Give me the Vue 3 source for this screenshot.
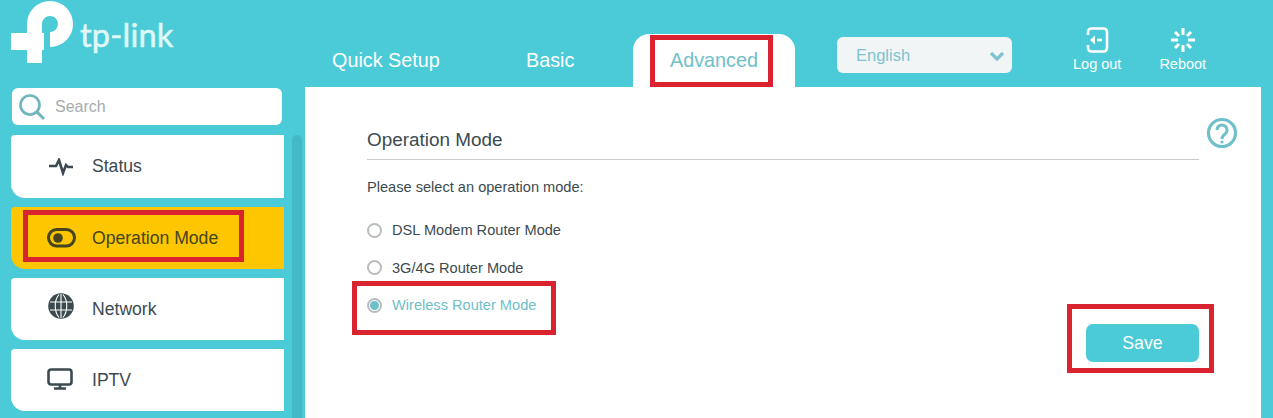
<template>
  <div class="page">
    <header class="topbar">
      <div class="logo">
        <svg width="68" height="66" viewBox="0 0 68 66" fill="none" stroke="#fff">
          <path d="M29.500 63V24a15.500 15.500 0 1 1 15.500 15.500" stroke-width="15" />
          <path d="M6 41.500h33" stroke-width="17" />
        </svg>
        <span class="wordmark">tp-link</span>
      </div>
      <nav class="tabs">
        <a v-for="tab in tabs" :key="tab" class="tab" :class="{ active: tab === 'Advanced' }">
          {{ tab }}
          <i v-if="tab === 'Advanced'" class="mark mark-tab"></i>
        </a>
      </nav>
      <div class="lang">
        <span>English</span>
        <svg width="16" height="10" viewBox="0 0 16 10">
          <path d="M2 2l6 6 6-6" fill="none" stroke="#7fc4cc" stroke-width="3.200" />
        </svg>
      </div>
      <div class="actions">
        <div class="action">
          <svg width="23" height="26" viewBox="0 0 23 26" fill="none" stroke="#fff" stroke-width="2.600">
            <path d="M2 8V5a3.500 3.500 0 0 1 3.500-3.500h12A3.500 3.500 0 0 1 21 5v16a3.500 3.500 0 0 1-3.500 3.500h-12A3.500 3.500 0 0 1 2 21v-3" />
            <path d="M4 13l5-4.500v9z" fill="#fff" stroke="none" />
            <path d="M11 13h5" />
          </svg>
          <span>Log out</span>
        </div>
        <div class="action">
          <svg width="26" height="26" viewBox="0 0 26 26" stroke="#fff" stroke-width="3">
            <path d="M13 1v7M13 18v7M1 13h7M18 13h7M5 5l4 4M17 17l4 4M21 5l-4 4M9 17l-4 4" />
          </svg>
          <span>Reboot</span>
        </div>
      </div>
    </header>

    <div class="body">
      <aside class="side">
        <div class="search">
          <svg width="28" height="28" viewBox="0 0 28 28" fill="none" stroke="#6fb5bd" stroke-width="2.600">
            <circle cx="12" cy="12" r="9.500" />
            <path d="M19 19l7 7" stroke-width="3" />
          </svg>
          <span>Search</span>
        </div>
        <div class="menu-wrap">
          <ul class="menu">
            <li v-for="item in menu" :key="item.label" class="item" :class="{ on: item.on }">
              <span class="item-icon" v-html="item.icon"></span>
              <span>{{ item.label }}</span>
              <i v-if="item.on" class="mark mark-item"></i>
            </li>
          </ul>
          <div class="scroll"></div>
        </div>
      </aside>

      <main class="panel">
        <div class="title-row">
          <h2>Operation Mode</h2>
          <svg class="help" width="32" height="32" viewBox="0 0 32 32" fill="none" stroke="#6fc0c9">
            <circle cx="16" cy="16" r="13.500" stroke-width="3.200" />
            <path d="M11 13a5 5 0 1 1 8 4c-2 1.500-3 2.500-3 5" stroke-width="3" />
            <circle cx="16" cy="25" r="1.600" fill="#6fc0c9" stroke="none" />
          </svg>
        </div>
        <p class="hint">Please select an operation mode:</p>
        <div class="modes">
          <label v-for="mode in modes" :key="mode.label" class="mode" :class="{ picked: mode.picked }">
            <span class="radio"><b v-if="mode.picked"></b></span>
            {{ mode.label }}
            <i v-if="mode.picked" class="mark mark-mode"></i>
          </label>
        </div>
        <div class="foot">
          <button class="save">
            Save
            <i class="mark mark-save"></i>
          </button>
        </div>
      </main>
    </div>
  </div>
</template>

<script setup>
const tabs = ['Quick Setup', 'Basic', 'Advanced']

const menu = [
  {
    label: 'Status',
    icon: '<svg width="28" height="18" viewBox="0 0 28 18" fill="none" stroke="#3c4a50" stroke-width="2.600"><path d="M2 8h7l3-6 4 13 3-8 2 2h5"/></svg>'
  },
  {
    label: 'Operation Mode',
    on: true,
    icon: '<svg width="30" height="20" viewBox="0 0 30 20" fill="none" stroke="#45451f" stroke-width="3"><rect x="1.500" y="1.500" width="26" height="16.500" rx="8.200"/><circle cx="11" cy="10" r="4.800" fill="#45451f" stroke="none"/></svg>'
  },
  {
    label: 'Network',
    icon: '<svg width="28" height="26" viewBox="0 0 26 26"><circle cx="13" cy="13" r="12.800" fill="#3c4a50"/><path d="M2 9h22M2 17h22M13 1v24M11 1.500c-5 6-5 17 0 23M15 1.500c5 6 5 17 0 23" fill="none" stroke="#fff" stroke-width="1.100"/></svg>'
  },
  {
    label: 'IPTV',
    icon: '<svg width="28" height="22" viewBox="0 0 28 22" fill="none" stroke="#3c4a50" stroke-width="2.600"><rect x="1.500" y="1.500" width="23" height="15" rx="2.500"/><path d="M13 17v3M7 20.500h12"/></svg>'
  }
]

const modes = [
  { label: 'DSL Modem Router Mode' },
  { label: '3G/4G Router Mode' },
  { label: 'Wireless Router Mode', picked: true }
]
</script>

<style>
html,
body {
  margin: 0;
  overflow: hidden;
}
</style>

<style scoped>
.page {
  width: 1273px;
  height: 418px;
  overflow: hidden;
  background: #4acbd7;
  font-family: "Liberation Sans", Arial, sans-serif;
  color: #3c4a50;
}

.topbar {
  display: flex;
  height: 87px;
}

.logo {
  width: 332px;
  flex: none;
  display: flex;
  align-items: flex-start;
}

.logo svg {
  margin: 0 0 0 5px;
}

.wordmark {
  margin: 15px 0 0 7px;
  font-family: Lato, sans-serif;
  font-size: 32.500px;
  letter-spacing: 0.2px;
  color: #dff7f8;
  -webkit-text-stroke: 0.6px #dff7f8;
}

.tabs {
  display: flex;
  align-items: flex-end;
}

.tab {
  position: relative;
  font-size: 19.800px;
  color: #fff;
  height: 53px;
  line-height: 52px;
}

.tab:nth-child(1) {
  width: 194px;
}

.tab:nth-child(2) {
  width: 107px;
}

.tab.active {
  width: 162px;
  text-align: center;
  background: #fff;
  color: #6fc0c9;
  border-radius: 16px 16px 0 0;
}

.lang {
  width: 175px;
  height: 36px;
  box-sizing: border-box;
  margin: 37px 0 0 42px;
  padding: 1px 7px 0 19px;
  display: flex;
  align-items: center;
  justify-content: space-between;
  background: #f2f5f6;
  border-radius: 6px;
  color: #7fc4cc;
  font-size: 16.500px;
}

.actions {
  display: flex;
  margin: 27px 0 0 61px;
  gap: 38px;
}

.action {
  display: flex;
  flex-direction: column;
  align-items: center;
  gap: 3px;
  color: #fff;
  font-size: 14.500px;
}

.body {
  display: flex;
  height: 331px;
}

.side {
  width: 305px;
  flex: none;
  padding: 1px 0 0 11px;
  box-sizing: border-box;
}

.search {
  display: flex;
  align-items: center;
  width: 270px;
  height: 37px;
  margin-left: 1px;
  padding-left: 6px;
  box-sizing: border-box;
  gap: 9px;
  background: #fff;
  border-radius: 6px;
  color: #a6acae;
  font-size: 16px;
}

.menu-wrap {
  display: flex;
  margin-top: 10px;
}

.menu {
  list-style: none;
  margin: 0;
  padding: 0;
  width: 273px;
  display: flex;
  flex-direction: column;
  gap: 9px;
}

.item {
  position: relative;
  display: flex;
  align-items: center;
  height: 62px;
  flex: none;
  background: #fff;
  border-radius: 4px 0 0 14px;
  font-size: 17.600px;
}

.item:first-child {
  height: 63px;
}

.item.on {
  background: #fec600;
  color: #45451f;
}

.item-icon {
  width: 81px;
  padding-left: 36px;
  box-sizing: border-box;
  display: flex;
}

.item:nth-child(3) .item-icon {
  margin-top: -6px;
}

.item:nth-child(4) .item-icon {
  margin-top: -2px;
}

.scroll {
  width: 10px;
  height: 300px;
  margin-left: 8px;
  background: #43b9c8;
  border-radius: 5px 5px 0 0;
}

.panel {
  width: 956px;
  height: 331px;
  box-sizing: border-box;
  padding: 36px 62px 0;
  background: #fff;
}

.title-row {
  position: relative;
  height: 36px;
  border-bottom: 1px solid #c8cccd;
}

h2 {
  margin: 0;
  font-size: 18.900px;
  font-weight: normal;
  line-height: 34px;
}

.help {
  position: absolute;
  right: -39px;
  top: -6px;
}

.hint {
  margin: 17px 0 0;
  font-size: 14.600px;
  line-height: 20px;
}

.modes {
  margin-top: 23px;
  display: flex;
  flex-direction: column;
  gap: 17.700px;
}

.mode {
  position: relative;
  display: flex;
  align-items: center;
  gap: 10px;
  height: 20px;
  font-size: 14.600px;
}

.mode.picked {
  color: #6fc0c9;
}

.radio {
  width: 15px;
  height: 15px;
  box-sizing: border-box;
  display: flex;
  align-items: center;
  justify-content: center;
  border: 2px solid #b8bcbd;
  border-radius: 50%;
}

.radio b {
  width: 9px;
  height: 9px;
  border-radius: 50%;
  background: #6fc0c9;
}

.foot {
  display: flex;
  justify-content: flex-end;
  margin-top: 9px;
}

.save {
  position: relative;
  width: 113px;
  height: 38px;
  border: 0;
  border-radius: 7px;
  background: #4acbd7;
  color: #fff;
  font: 17.800px "Liberation Sans", Arial, sans-serif;
}

.mark {
  position: absolute;
  box-sizing: border-box;
  border: 5px solid #d9232e;
  pointer-events: none;
}

.mark-tab {
  left: 17px;
  top: 1px;
  width: 123px;
  height: 52px;
}

.mark-item {
  left: 12px;
  top: 3px;
  width: 221px;
  height: 52px;
}

.mark-mode {
  left: -15px;
  top: -14px;
  width: 204px;
  height: 54px;
}

.mark-save {
  left: -19px;
  top: -20px;
  width: 147px;
  height: 69px;
}
</style>
